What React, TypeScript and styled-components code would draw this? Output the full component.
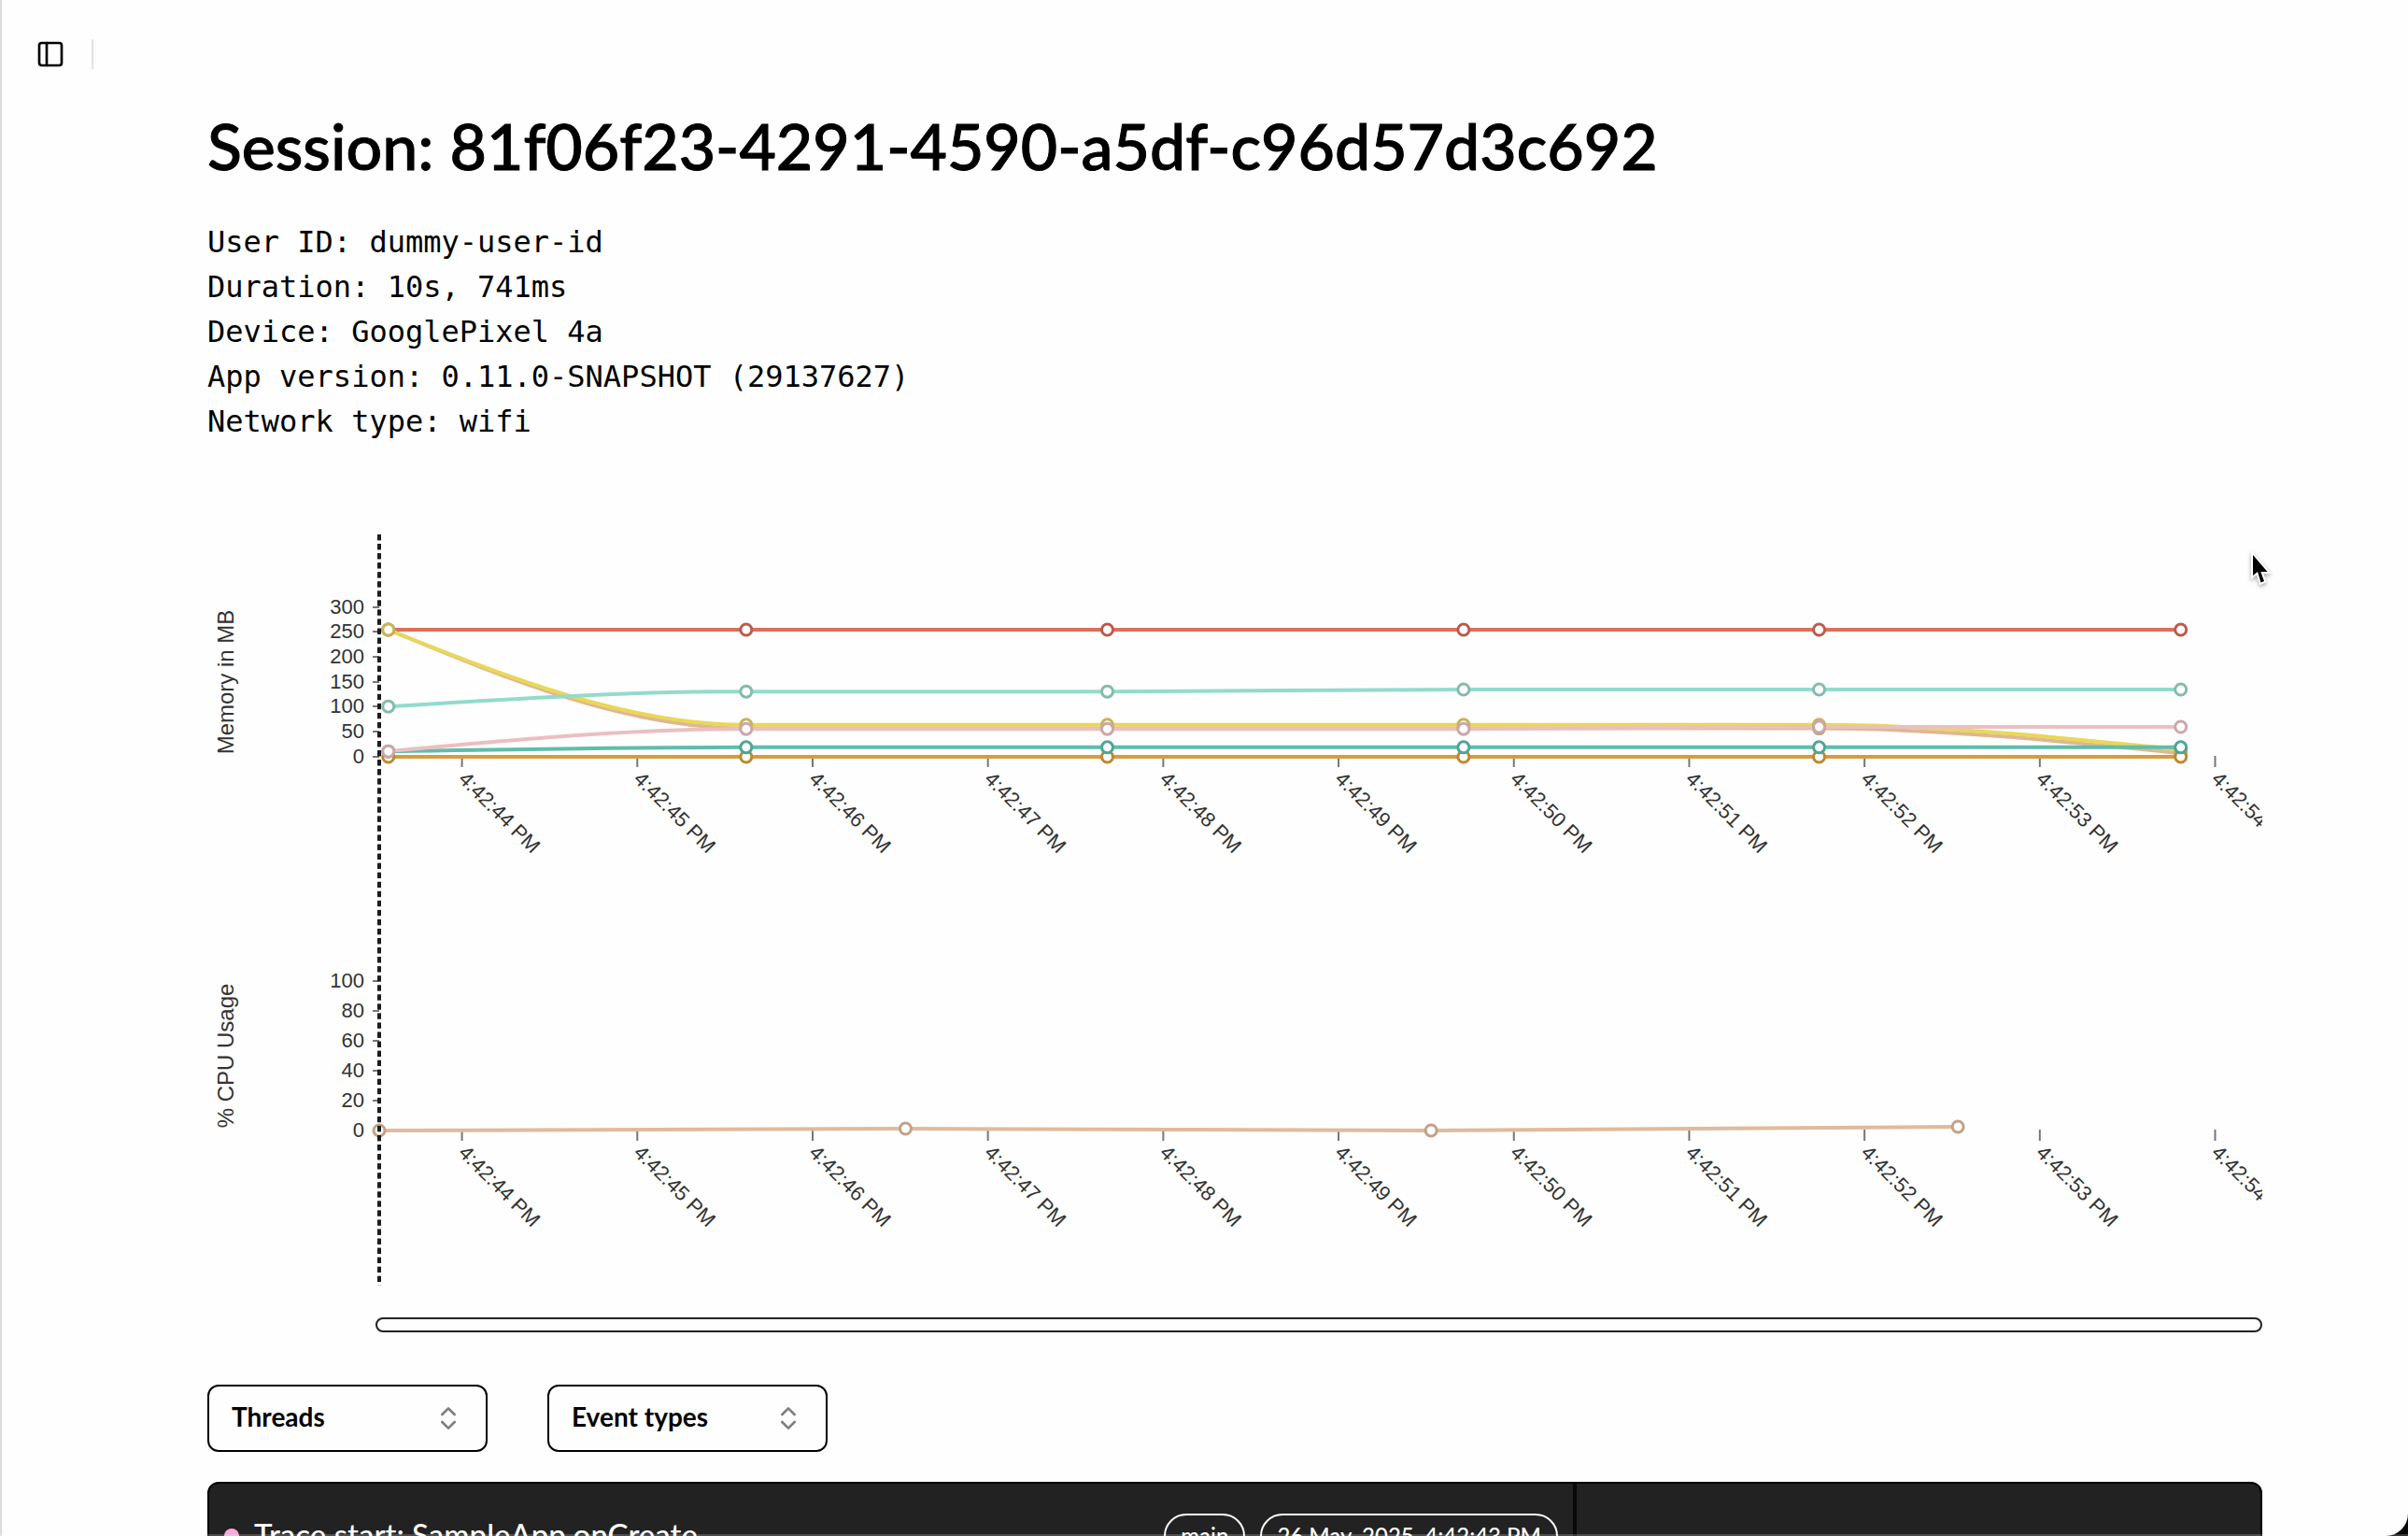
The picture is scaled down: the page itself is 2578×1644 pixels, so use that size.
import React, { useLayoutEffect, useRef, useState } from "react";
import styled, { createGlobalStyle } from "styled-components";
import { ChevronsUpDown, PanelLeft } from "lucide-react";

const Global = createGlobalStyle`
  html, body { margin: 0; background: #050805; }
  *, *::before, *::after { box-sizing: border-box; }
`;

const display = `Lato, "Open Sans", sans-serif`;
const mono = `"DejaVu Sans Mono", "Liberation Mono", monospace`;
const plain = `"Liberation Sans", Arial, sans-serif`;

const Page = styled.div`
  height: 100vh;
  overflow: hidden;
  background: #fefefe;
  border-left: 2px solid #dcdcdc;
  border-radius: 0 0 24px 0;
  color: #000;
  font-family: ${display};
`;

const TopBar = styled.header`
  display: flex;
  align-items: center;
  gap: 28px;
  height: 116px;
  padding-left: 36px;
`;

const IconButton = styled.button`
  display: flex;
  padding: 0;
  border: 0;
  background: none;
  color: #000;
`;

const Divider = styled.span`
  width: 2px;
  height: 32px;
  background: #e2e2e2;
`;

const Main = styled.main`
  padding: 0 156px 0 220px;
`;

const Title = styled.h1`
  margin: 0;
  font-size: 68px;
  font-weight: 500;
  line-height: 80px;
  white-space: nowrap;
  -webkit-text-stroke: 1px #000;
`;

const Facts = styled.ul`
  margin: 0;
  padding: 39px 0 1px;
  list-style: none;
  font-family: ${mono};
  font-size: 32px;
  line-height: 48px;
`;

const Timeline = styled.section`
  position: relative;
  display: grid;
  margin-top: 96px;
`;

const ChartSvg = styled.svg`
  display: block;
  width: 100%;
  height: 400px;
  font-family: ${plain};
  font-size: 22px;
  fill: #333;
`;

const Cursor = styled.div`
  position: absolute;
  top: 0;
  bottom: -4px;
  left: 182px;
  width: 4px;
  background: linear-gradient(#1c1c1c 0 60%, transparent 60%) 0 0 / 4px 10px repeat-x;
  background-repeat: no-repeat round;
`;

const Track = styled.div`
  height: 16px;
  margin: 38px 0 0 180px;
  border: 2px solid #222;
  border-radius: 8px;
`;

const Filters = styled.div`
  display: flex;
  gap: 64px;
  margin-top: 56px;
`;

const Field = styled.label`
  display: grid;
  align-items: center;
  width: 300px;
  height: 72px;
  & > * { grid-area: 1 / 1; }
  & > svg {
    justify-self: end;
    margin-right: 26px;
    color: #7f7f7f;
    pointer-events: none;
  }
`;

const Select = styled.select`
  appearance: none;
  width: 100%;
  height: 100%;
  padding: 0 24px 4px;
  border: 2px solid #000;
  border-radius: 12px;
  background: #fefefe;
  color: #000;
  font-family: ${display};
  font-size: 28px;
  font-weight: 700;
`;

const Panel = styled.section`
  display: grid;
  grid-template-columns: 2fr 1fr;
  margin-top: 32px;
  border: 2px solid #000;
  border-radius: 12px;
  background: #222;
  color: #fff;
  overflow: hidden;
`;

const Events = styled.div`
  border-right: 4px solid #090909;
  min-height: 800px;
`;

const EventRow = styled.div`
  display: flex;
  align-items: center;
  gap: 16px;
  padding: 32px 16px;
`;

const Dot = styled.span`
  width: 16px;
  height: 16px;
  border-radius: 50%;
  background: #f9a8d4;
`;

const EventName = styled.p`
  margin: 0 auto 0 0;
  padding-bottom: 4px;
  font-size: 33px;
  font-weight: 500;
  line-height: 44px;
`;

const Pill = styled.span`
  padding: 0 16px;
  border: 2px solid #fff;
  border-radius: 28px;
  font-size: 24px;
  font-weight: 500;
  line-height: 44px;
  white-space: nowrap;
`;

const Details = styled.div`
  min-width: 0;
`;

const BottomEdge = styled.div`
  position: fixed;
  inset: auto 0 0 0;
  height: 2px;
  background: rgba(255, 255, 255, 0.2);
`;

const Pointer = styled.svg`
  position: fixed;
  top: 590px;
  right: 144px;
  filter: drop-shadow(0 2px 2px rgba(0, 0, 0, 0.35));
`;

type Series = { color: string; ring: string; values: number[] };
type ChartProps = {
  title: string;
  max: number;
  ticks: number[];
  times: number[];
  series: Series[];
};

const LEFT = 184;
const TOP = 78;
const HEIGHT = 160;
const SPAN = 10.741;
const FIRST_TICK = 0.472;

/* Monotone cubic path through the samples. */
function curve(p: number[][]): string {
  const n = p.length;
  const s = p.slice(1).map((q, i) => (q[1] - p[i][1]) / (q[0] - p[i][0]));
  const t = p.map((_, i) => {
    if (i === 0 || i === n - 1) return 0;
    const a = s[i - 1];
    const b = s[i];
    if (a * b <= 0) return 0;
    return (Math.sign(a) + Math.sign(b)) * Math.min(Math.abs(a), Math.abs(b), Math.abs(a + b) / 4);
  });
  t[0] = (3 * s[0] - t[1]) / 2;
  t[n - 1] = (3 * s[n - 2] - t[n - 2]) / 2;
  let d = `M${p[0][0]},${p[0][1]}`;
  for (let i = 1; i < n; i++) {
    const h = (p[i][0] - p[i - 1][0]) / 3;
    d += `C${p[i - 1][0] + h},${p[i - 1][1] + t[i - 1] * h} ${p[i][0] - h},${p[i][1] - t[i] * h} ${p[i][0]},${p[i][1]}`;
  }
  return d;
}

function Chart({ title, max, ticks, times, series }: ChartProps) {
  const ref = useRef<SVGSVGElement>(null);
  const [width, setWidth] = useState(2200);
  useLayoutEffect(() => {
    const el = ref.current;
    if (!el) return;
    const measure = () => setWidth(el.getBoundingClientRect().width);
    measure();
    const observer = new ResizeObserver(measure);
    observer.observe(el);
    return () => observer.disconnect();
  }, []);

  const x = (s: number) => LEFT + (s * (width - LEFT)) / SPAN;
  const y = (v: number) => TOP + HEIGHT - (v / max) * HEIGHT;
  const seconds = Array.from({ length: 11 }, (_, i) => i);
  const points = (s: Series) => s.values.map((v, i) => [x(times[i]), y(v)]);

  return (
    <ChartSvg ref={ref} role="img" aria-label={title}>
      <text transform={`translate(20 ${TOP + HEIGHT / 2}) rotate(-90)`} textAnchor="middle" dy="8" fontSize="24">
        {title}
      </text>
      {ticks.map((v) => (
        <g key={v} transform={`translate(0 ${Math.floor(y(v))})`}>
          <line x1={LEFT - 7} x2={LEFT} stroke="#777" strokeWidth="2" />
          <text x={LEFT - 16} y="7" textAnchor="end">
            {v}
          </text>
        </g>
      ))}
      {seconds.map((s) => (
        <g key={s} transform={`translate(${x(FIRST_TICK + s)} ${TOP + HEIGHT})`}>
          <line y1="-1" y2="11" stroke="#777" strokeWidth="2" />
          <text transform="translate(0 20) rotate(45)" dy="7">
            {`4:42:${44 + s} PM`}
          </text>
        </g>
      ))}
      {series.map((s) => (
        <path key={s.color} d={curve(points(s))} fill="none" stroke={s.color} strokeWidth="4" />
      ))}
      {series.map((s) =>
        points(s).map(([px, py]) => (
          <circle key={`${s.color}${px}`} cx={px} cy={py} r="6" fill="#fff" stroke={s.ring} strokeWidth="3" />
        ))
      )}
    </ChartSvg>
  );
}

const memory: Series[] = [
  { color: "#df6e57", ring: "#bb5b4d", values: [255, 255, 255, 255, 255, 255] },
  { color: "#dfb793", ring: "#c4a284", values: [255, 57, 57, 57, 57, 7] },
  { color: "#e9d856", ring: "#c6b556", values: [255, 64, 64, 64, 64, 14] },
  { color: "#d89c3c", ring: "#bb8930", values: [0, 0, 0, 0, 0, 0] },
  { color: "#5fbdab", ring: "#4fa595", values: [11, 19, 19, 19, 19, 19] },
  { color: "#93dbcc", ring: "#84bbae", values: [101, 131, 131, 135, 135, 135] },
  { color: "#ebbfc1", ring: "#cda6aa", values: [11, 56, 56, 56, 60, 60] },
];

const cpu: Series[] = [{ color: "#dfbb9d", ring: "#c2a188", values: [0, 1.25, 0, 2.5] }];

const facts = [
  "User ID: dummy-user-id",
  "Duration: 10s, 741ms",
  "Device: GooglePixel 4a",
  "App version: 0.11.0-SNAPSHOT (29137627)",
  "Network type: wifi",
];

function Filter({ name }: { name: string }) {
  return (
    <Field>
      <Select aria-label={name} defaultValue={name}>
        <option>{name}</option>
      </Select>
      <ChevronsUpDown size={32} aria-hidden="true" />
    </Field>
  );
}

export default function App() {
  return (
    <>
      <Global />
      <Page>
        <TopBar>
          <IconButton type="button" aria-label="Toggle sidebar">
            <PanelLeft size={32} />
          </IconButton>
          <Divider />
        </TopBar>
        <Main>
          <Title>Session: 81f06f23-4291-4590-a5df-c96d57d3c692</Title>
          <Facts>
            {facts.map((fact) => (
              <li key={fact}>{fact}</li>
            ))}
          </Facts>
          <Timeline>
            <Chart
              title="Memory in MB"
              max={300}
              ticks={[0, 50, 100, 150, 200, 250, 300]}
              times={[0.052, 2.093, 4.153, 6.185, 8.213, 10.276]}
              series={memory}
            />
            <Chart title="% CPU Usage" max={100} ticks={[0, 20, 40, 60, 80, 100]} times={[0, 3.002, 6, 9.005]} series={cpu} />
            <Cursor />
          </Timeline>
          <Track />
          <Filters>
            <Filter name="Threads" />
            <Filter name="Event types" />
          </Filters>
          <Panel>
            <Events>
              <EventRow>
                <Dot />
                <EventName>Trace start: SampleApp.onCreate</EventName>
                <Pill>main</Pill>
                <Pill>26 May, 2025, 4:42:43 PM</Pill>
              </EventRow>
            </Events>
            <Details />
          </Panel>
        </Main>
        <BottomEdge />
        <Pointer width="26" height="40" viewBox="0 0 26 40" aria-hidden="true">
          <path
            d="M4 4V26L9 22L12.500 33.500L16 32L12.300 22H19.500Z"
            fill="#000"
            stroke="#fff"
            strokeWidth="4"
            paintOrder="stroke"
          />
        </Pointer>
      </Page>
    </>
  );
}
